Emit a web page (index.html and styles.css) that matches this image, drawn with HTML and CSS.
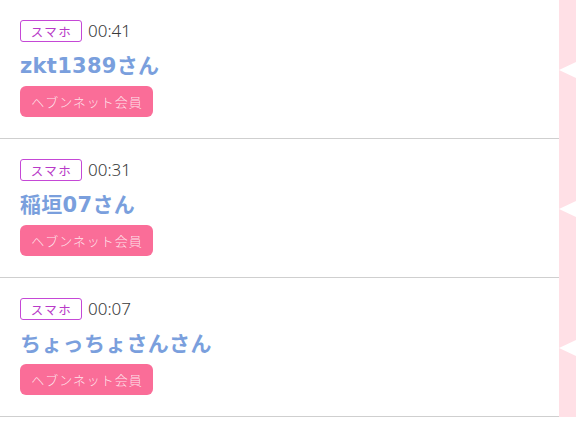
FILE: index.html
```html
<!DOCTYPE html>
<html lang="ja">
<head>
<meta charset="utf-8">
<title>list</title>
<link rel="stylesheet" href="styles.css">
</head>
<body>
<div class="list">
  <div class="row">
    <div class="main">
      <div class="meta"><span class="device">スマホ</span><span class="time">00:41</span></div>
      <div class="name">zkt1389さん</div>
      <div class="member">ヘブンネット会員</div>
    </div>
    <div class="side"><span class="arrow"></span></div>
  </div>
  <div class="row">
    <div class="main">
      <div class="meta"><span class="device">スマホ</span><span class="time">00:31</span></div>
      <div class="name">稲垣07さん</div>
      <div class="member">ヘブンネット会員</div>
    </div>
    <div class="side"><span class="arrow"></span></div>
  </div>
  <div class="row">
    <div class="main">
      <div class="meta"><span class="device">スマホ</span><span class="time">00:07</span></div>
      <div class="name">ちょっちょさんさん</div>
      <div class="member">ヘブンネット会員</div>
    </div>
    <div class="side"><span class="arrow"></span></div>
  </div>
</div>
</body>
</html>
```
FILE: styles.css
```css
html, body {
  margin: 0;
  padding: 0;
  background: #ffffff;
}
body {
  font-family: "Noto Sans", "Noto Sans CJK JP", sans-serif;
  color: #333333;
}
.list {
  display: flex;
  flex-direction: column;
}
.row {
  display: flex;
  height: 139px;
}
.main {
  flex: 1;
  border-bottom: 1px solid #cfcfcf;
  padding: 20px 20px 0 20px;
  display: flex;
  flex-direction: column;
  align-items: flex-start;
}
.side {
  width: 17px;
  background: #ffe0e6;
  display: flex;
  align-items: center;
  justify-content: flex-start;
}
.arrow {
  width: 0;
  height: 0;
  border-right: 17px solid #ffffff;
  border-top: 8px solid transparent;
  border-bottom: 8px solid transparent;
}
.meta {
  display: flex;
  align-items: center;
  gap: 6px;
  height: 22px;
}
.device {
  box-sizing: border-box;
  height: 22px;
  width: 62px;
  border: 1.5px solid #c548d6;
  border-radius: 3px;
  color: #b83ac8;
  font-family: "Noto Sans CJK JP", sans-serif;
  font-size: 12.5px;
  letter-spacing: 1.5px;
  padding-left: 1px;
  display: flex;
  align-items: center;
  justify-content: center;
}
.time {
  font-family: "Noto Sans", "Noto Sans CJK JP", sans-serif;
  font-weight: 300;
  font-size: 17px;
  color: #3a3a3a;
  line-height: 22px;
}
.name {
  margin-top: 8px;
  height: 32px;
  line-height: 32px;
  font-family: "DejaVu Sans", "Noto Sans CJK JP", sans-serif;
  font-weight: 700;
  font-size: 21px;
  letter-spacing: 0.3px;
  color: #7a9fdd;
  white-space: nowrap;
}
.member {
  margin-top: 4px;
  box-sizing: border-box;
  height: 31px;
  width: 133px;
  background: #fa6d98;
  border-radius: 6px;
  color: rgba(255, 255, 255, 0.82);
  font-family: "Noto Sans CJK JP", sans-serif;
  font-weight: 300;
  font-size: 13px;
  letter-spacing: 1px;
  padding-left: 1px;
  display: flex;
  align-items: center;
  justify-content: center;
}
```
